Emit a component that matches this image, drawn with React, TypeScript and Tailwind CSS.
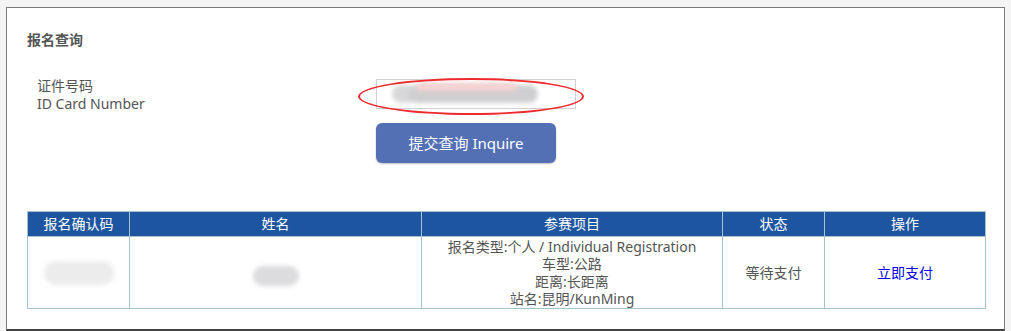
import React from "react";

const font = {
  fontFamily: '"Segoe UI", "Noto Sans", "Noto Sans CJK SC", sans-serif',
};

const cols = [
  { label: "报名确认码", w: "w-[102px]" },
  { label: "姓名", w: "w-[292px]" },
  { label: "参赛项目", w: "w-[301px]" },
  { label: "状态", w: "w-[102px]" },
  { label: "操作", w: "w-[161px]" },
];

function Smudge({ className }: { className: string }) {
  return <div className={`rounded-full blur-[2px] ${className}`} />;
}

export default function App() {
  return (
    <div className="h-[331px] overflow-hidden bg-[#f4f4f4] px-[6px] pt-[7px]" style={font}>
      <div className="h-[324px] border border-[#7a7a7a] border-b-2 border-b-[#444] bg-white pl-[20px] pr-[19px] pt-[24px]">
        <h2 className="text-[14px] font-bold leading-[16px] text-[#555]">报名查询</h2>

        {/* query form */}
        <div className="mt-[29px] flex">
          <div className="w-[349px] pl-[10px] text-[14px] leading-[18px] text-[#555]">
            <div>证件号码</div>
            <div>ID Card Number</div>
          </div>
          <div className="flex flex-col">
            <div className="relative mt-[2px] h-[30px] w-[200px] border border-[#d0d0d0] bg-white">
              <div className="absolute left-[15px] top-[5px] flex items-center">
                <Smudge className="h-[18px] w-[24px] bg-[#d8d8d8]" />
                <Smudge className="-ml-[8px] h-[18px] w-[130px] bg-[#cfcfd2]" />
              </div>
              <div className="absolute left-[40px] top-[3px] h-[8px] w-[100px] rounded-full bg-[#f6d2d2] blur-[2px]" />
              <div className="absolute -left-[19px] -top-[2px] h-[37px] w-[226px] rounded-[50%] border-[2.5px] border-[#ee2a2e]" />
            </div>
            <button className="mt-[14px] h-[40px] w-[180px] rounded-[6px] bg-[#5470b5] text-[15px] text-white shadow-[0_1px_2px_rgba(0,0,0,0.25)]">
              提交查询 Inquire
            </button>
          </div>
        </div>

        {/* results */}
        <table className="mt-[48px] w-[958px] table-fixed border-collapse text-[14px]">
          <thead>
            <tr className="h-[25px] bg-[#1e55a0] text-white">
              {cols.map((c) => (
                <th key={c.label} className={`${c.w} border border-[#a3c3cf] p-0 text-center font-normal leading-[18px]`}>
                  {c.label}
                </th>
              ))}
            </tr>
          </thead>
          <tbody>
            <tr className="h-[72px] text-[#555]">
              <td className="border border-[#a3c3cf] p-0">
                <div className="flex justify-center">
                  <Smudge className="h-[24px] w-[70px] bg-[#ececed]" />
                </div>
              </td>
              <td className="border border-[#a3c3cf] p-0">
                <div className="flex justify-center pt-[6px]">
                  <Smudge className="h-[20px] w-[46px] rounded-[6px] bg-[#dcdbdd]" />
                </div>
              </td>
              <td className="border border-[#a3c3cf] p-0 text-center leading-[17.5px]">
                <div>报名类型:个人 / Individual Registration</div>
                <div>车型:公路</div>
                <div>距离:长距离</div>
                <div>站名:昆明/KunMing</div>
              </td>
              <td className="border border-[#a3c3cf] p-0 text-center">等待支付</td>
              <td className="border border-[#a3c3cf] p-0 text-center">
                <a href="#" className="text-[#0000ee]">立即支付</a>
              </td>
            </tr>
          </tbody>
        </table>
      </div>
    </div>
  );
}
